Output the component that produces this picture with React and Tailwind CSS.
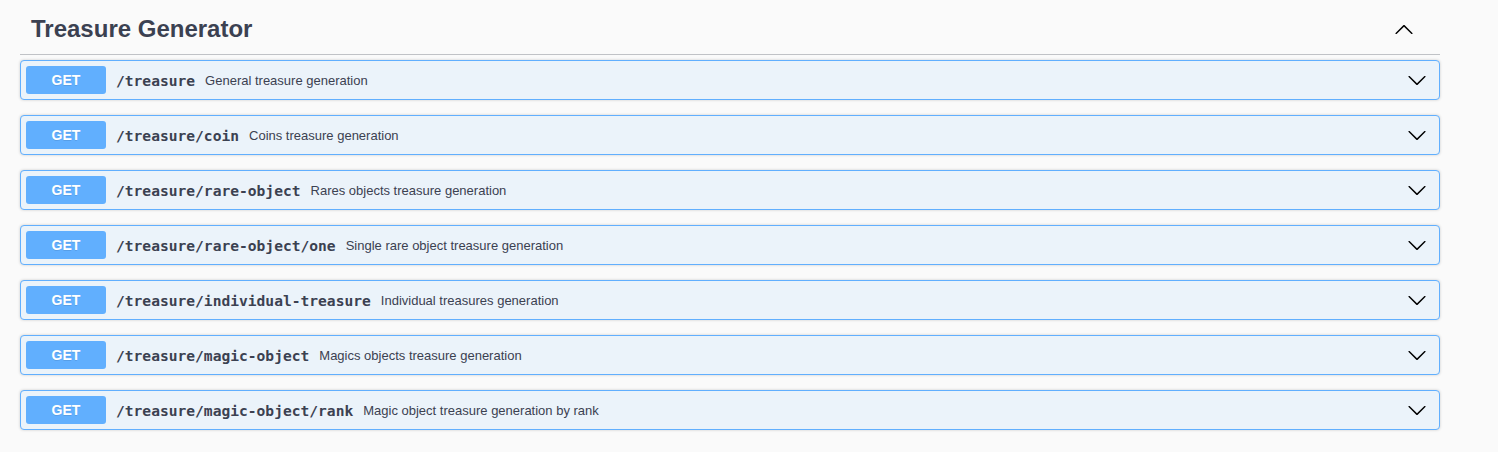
import React from 'react';

const endpoints = [
  { path: '/treasure', summary: 'General treasure generation' },
  { path: '/treasure/coin', summary: 'Coins treasure generation' },
  { path: '/treasure/rare-object', summary: 'Rares objects treasure generation' },
  { path: '/treasure/rare-object/one', summary: 'Single rare object treasure generation' },
  { path: '/treasure/individual-treasure', summary: 'Individual treasures generation' },
  { path: '/treasure/magic-object', summary: 'Magics objects treasure generation' },
  { path: '/treasure/magic-object/rank', summary: 'Magic object treasure generation by rank' }
];

function ArrowDown() {
  return (
    <svg width="20" height="20" viewBox="0 0 20 20" className="shrink-0 fill-black">
      <path d="M17.418 6.109c.272-.268.709-.268.979 0s.271.701 0 .969l-7.908 7.83c-.27.268-.707.268-.979 0l-7.908-7.83c-.27-.268-.27-.701 0-.969.271-.268.709-.268.979 0L10 13.25l7.418-7.141z" />
    </svg>
  );
}

function ArrowUp() {
  return (
    <svg width="20" height="20" viewBox="0 0 20 20" className="shrink-0 fill-black">
      <path d="M17.418 14.908c.272.268.709.268.979 0s.271-.701 0-.969l-7.908-7.83c-.27-.268-.707-.268-.979 0l-7.908 7.83c-.27.268-.27.701 0 .969.271.268.709.268.979 0L10 7.767l7.418 7.141z" />
    </svg>
  );
}

function Operation({ path, summary }) {
  return (
    <div className="flex h-[40px] items-center rounded-[4px] border border-[#61affe] bg-[#ebf3fa] pl-[5px] pr-[12px] shadow-[0_0_3px_rgba(0,0,0,0.19)]">
      <span className="flex h-[28px] w-[80px] items-center justify-center rounded-[3px] bg-[#61affe] pt-[1px] text-[14px] font-bold text-white [text-shadow:0_1px_0_rgba(0,0,0,0.1)] font-['Liberation_Sans',Arial,sans-serif]">
        GET
      </span>
      <span className="px-[10px] pt-[2px] text-[14.6px] font-bold text-[#3b4151] font-['DejaVu_Sans_Mono',monospace]">
        {path}
      </span>
      <span className="flex-1 pt-[2px] text-[13px] text-[#3b4151] font-['Liberation_Sans',Arial,sans-serif]">
        {summary}
      </span>
      <ArrowDown />
    </div>
  );
}

export default function App() {
  return (
    <div className="min-h-[452px] w-full bg-[#fafafa] font-['Liberation_Sans',Arial,sans-serif]">
      <div className="mx-[20px] w-[1420px]">
        <div className="flex h-[55px] items-center justify-between border-b border-[#3b4151]/30 pl-[11px] pr-[26px] pt-[4px]">
          <h3 className="text-[24px] font-bold text-[#3b4151]">Treasure Generator</h3>
          <ArrowUp />
        </div>
        <div className="mt-[5px] flex flex-col gap-[15px]">
          {endpoints.map((ep) => (
            <Operation key={ep.path} path={ep.path} summary={ep.summary} />
          ))}
        </div>
      </div>
    </div>
  );
}
